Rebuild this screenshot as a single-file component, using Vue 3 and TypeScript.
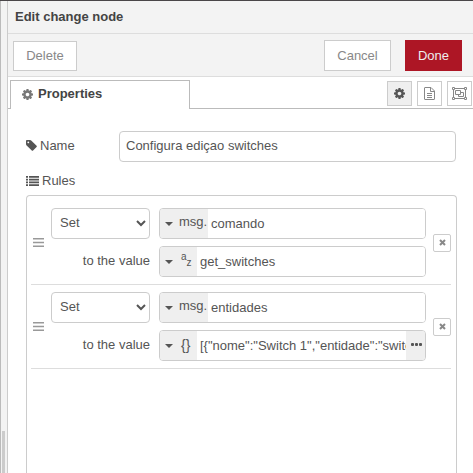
<script setup lang="ts">
import { ref } from 'vue'

type ValueType = 'msg' | 'str' | 'json'

interface Rule {
  action: string
  property: string
  valueType: ValueType
  value: string
}

const name = ref('Configura ediçao switches')

const rules = ref<Rule[]>([
  { action: 'Set', property: 'comando', valueType: 'str', value: 'get_switches' },
  { action: 'Set', property: 'entidades', valueType: 'json', value: '[{"nome":"Switch 1","entidade":"switch' },
])

const actions = ['Set', 'Change', 'Delete', 'Move']

function removeRule(index: number): void {
  rules.value.splice(index, 1)
}

const cog =
  'M1152 896q0-106-75-181t-181-75-181 75-75 181 75 181 181 75 181-75 75-181zm512-109v222q0 12-8 23t-20 13l-185 28q-19 54-39 91 35 50 107 138 10 12 10 25t-9 23q-27 37-99 108t-94 71q-12 0-26-9l-138-108q-44 23-91 38-16 136-29 186-7 28-36 28h-222q-14 0-24.500-8.500t-11.500-21.500l-28-184q-49-16-90-37l-141 107q-10 9-25 9-14 0-25-11-126-114-165-168-7-10-7-23 0-12 8-23 15-21 51-66.500t54-70.500q-27-50-41-99l-183-27q-13-2-21-12.500t-8-23.500v-222q0-12 8-23t19-13l186-28q14-46 39-92-40-57-107-138-10-12-10-24 0-10 9-23 26-36 98.500-107.500t94.500-71.500q13 0 26 10l138 107q44-23 91-38 16-136 29-186 7-28 36-28h222q14 0 24.500 8.500t11.500 21.500l28 184q49 16 90 37l142-107q9-9 24-9 13 0 25 10 129 119 165 170 7 8 7 22 0 12-8 23-15 21-51 66.500t-54 70.500q26 50 41 98l183 28q13 2 21 12.500t8 23.500z'
const tag =
  'M576 448q0-53-37.500-90.500t-90.500-37.500-90.500 37.500-37.500 90.500 37.500 90.500 90.500 37.500 90.500-37.500 37.500-90.500zm1067 576q0 53-37 90l-491 492q-39 37-91 37-53 0-90-37l-715-716q-38-37-64.500-101t-26.500-117v-416q0-52 38-90t90-38h416q53 0 117 26.500t102 64.500l715 714q37 39 37 91z'
</script>

<template>
  <div class="editor">
    <div class="gutter"><div class="thumb"></div></div>
    <main class="tray">
      <h1 class="title">Edit change node</h1>
      <div class="toolbar">
        <button type="button" class="btn delete">Delete</button>
        <button type="button" class="btn cancel">Cancel</button>
        <button type="button" class="btn done">Done</button>
      </div>

      <div class="tabs">
        <button type="button" class="tab">
          <svg class="icon" viewBox="128 128 1536 1536" aria-hidden="true"><path :d="cog" /></svg>
          <span>Properties</span>
        </button>
        <div class="tab-icons">
          <button type="button" class="square active" aria-label="Properties">
            <svg width="11" height="11" viewBox="128 128 1536 1536" aria-hidden="true"><path :d="cog" /></svg>
          </button>
          <button type="button" class="square" aria-label="Description">
            <svg class="line" width="11" height="13" viewBox="0 0 11 13" aria-hidden="true">
              <path d="M.5 1Q.5.500 1 .5H7L10.500 4V12Q10.500 12.500 10 12.500H1Q.5 12.500.5 12ZM6.500.5V4.500H10.500M3 6.500H8M3 8.500H8M3 10.500H8" />
            </svg>
          </button>
          <button type="button" class="square" aria-label="Appearance">
            <svg class="line" width="15" height="13" viewBox="0 0 15 13" aria-hidden="true">
              <path d="M2.500 1.500H12.500M2.500 11.500H12.500M1.500 2.500V10.500M13.500 2.500V10.500M.5.500H2.500V2.500H.5ZM12.500.5H14.500V2.500H12.500ZM.5 10.500H2.500V12.500H.5ZM12.500 10.500H14.500V12.500H12.500ZM3.500 3.500H8.500V7.500H3.500ZM8.500 5.500H11.500V9.500H6.500V7.500" />
            </svg>
          </button>
        </div>
      </div>

      <form class="form" @submit.prevent>
        <div class="name-row">
          <label for="node-name" class="caption">
            <svg class="icon" viewBox="128 128 1536 1536" aria-hidden="true"><path :d="tag" /></svg>
            <span>Name</span>
          </label>
          <input id="node-name" v-model="name" class="field" type="text" />
        </div>
        <div class="caption">
          <svg width="13" height="10" viewBox="0 0 13 11" preserveAspectRatio="none" aria-hidden="true">
            <path d="M0 0H2V2H0ZM3 0H13V2H3ZM0 3H2V5H0ZM3 3H13V5H3ZM0 6H2V8H0ZM3 6H13V8H3ZM0 9H2V11H0ZM3 9H13V11H3Z" />
          </svg>
          <span>Rules</span>
        </div>

        <ol class="rules">
          <li v-for="(rule, i) in rules" :key="i" class="rule">
            <svg class="handle" width="11" height="10" viewBox="0 0 11 10" aria-hidden="true">
              <path d="M0 0H11V1.500H0ZM0 3.700H11V5.200H0ZM0 7.500H11V9H0Z" />
            </svg>
            <div class="grid">
              <select v-model="rule.action" class="action" aria-label="Action">
                <option v-for="a in actions" :key="a">{{ a }}</option>
              </select>
              <div class="typed">
                <button type="button" class="type" aria-label="Property type: msg">
                  <svg width="8" height="4" viewBox="0 0 8 4" aria-hidden="true"><path d="M0 0H8L4 4Z" /></svg>
                  <span class="prefix">msg.</span>
                </button>
                <input v-model="rule.property" type="text" aria-label="Property" />
              </div>
              <label class="to" :for="`value-${i}`">to the value</label>
              <div class="typed">
                <button type="button" class="type narrow" :aria-label="`Value type: ${rule.valueType}`">
                  <svg width="8" height="4" viewBox="0 0 8 4" aria-hidden="true"><path d="M0 0H8L4 4Z" /></svg>
                  <span v-if="rule.valueType === 'str'" class="az"><span>a</span><span>z</span></span>
                  <span v-else class="braces">{}</span>
                </button>
                <input :id="`value-${i}`" v-model="rule.value" type="text" />
                <button v-if="rule.valueType === 'json'" type="button" class="expand" aria-label="Expand">
                  <svg width="11" height="3" viewBox="0 0 11 3" aria-hidden="true">
                    <rect width="3" height="3" rx="1" /><rect x="4" width="3" height="3" rx="1" /><rect x="8" width="3" height="3" rx="1" />
                  </svg>
                </button>
              </div>
            </div>
            <button type="button" class="remove" aria-label="Remove rule" @click="removeRule(i)">
              <svg width="7" height="7" viewBox="0 0 7 7" aria-hidden="true"><path d="M1 1L6 6M6 1L1 6" /></svg>
            </button>
          </li>
        </ol>
      </form>
    </main>
  </div>
</template>

<style>
body {
  margin: 0;
  background: #fff;
}
</style>

<style scoped>
* {
  box-sizing: border-box;
}
.editor {
  display: flex;
  height: 100vh;
  overflow: hidden;
  border-top: 1px solid #4a4649;
  font: 13px/20px "Liberation Sans", Arial, sans-serif;
  color: #555;
}
button,
input,
select {
  font: inherit;
  color: inherit;
  margin: 0;
}
button {
  display: flex;
  align-items: center;
  justify-content: center;
  padding: 0;
  cursor: pointer;
}
svg {
  flex: none;
  fill: currentColor;
}
.gutter {
  flex: none;
  width: 8px;
  display: flex;
  align-items: flex-end;
  padding-left: 1px;
  background: #f3f3f3;
  border-left: 1px solid #bbb;
  border-right: 1px solid #ccc;
}
.thumb {
  width: 3px;
  height: 9%;
  background: #ccc;
}
.tray {
  flex: 1;
  min-width: 0;
  display: flex;
  flex-direction: column;
}
.title {
  margin: 0;
  padding: 6px 7px;
  background: #f3f3f3;
  border-bottom: 1px solid #ddd;
  font-size: 13px;
  line-height: 20px;
  color: #444;
}
.toolbar {
  display: flex;
  align-items: center;
  padding: 6px 11px 5px 5px;
  background: #f3f3f3;
  border-bottom: 1px solid #ddd;
}
.btn {
  height: 31px;
  padding: 0 12px;
  border: 1px solid #ccc;
  border-radius: 0;
  background: #fff;
  color: #888;
}
.delete {
  width: 64px;
  height: 30px;
  margin-right: auto;
}
.cancel {
  width: 67px;
}
.done {
  width: 57px;
  margin-left: 14px;
  background: #ad1625;
  border-color: #ad1625;
  color: #eee;
}
.tabs {
  display: flex;
  justify-content: space-between;
  padding: 3px 1px 0 2px;
  background: linear-gradient(#bbb, #bbb) bottom / 100% 1px no-repeat;
}
.tab {
  width: 180px;
  height: 29px;
  gap: 5px;
  justify-content: flex-start;
  padding: 0 0 2px 11px;
  border: 1px solid #bbb;
  border-bottom: 0;
  background: #fff;
  font-weight: bold;
  color: #444;
}
.tab .icon {
  color: #777;
}
.icon {
  width: 11px;
  height: 11px;
}
.tab-icons {
  display: flex;
  gap: 5px;
  padding-top: 1px;
}
.square {
  width: 25px;
  height: 25px;
  border: 1px solid #ccc;
  background: #fff;
  color: #888;
}
.square.active {
  background: #efefef;
  color: #555;
}
.line {
  fill: none;
  stroke: currentColor;
  stroke-width: 1px;
}
.form {
  flex: 1;
  min-height: 0;
  display: flex;
  flex-direction: column;
  padding: 22px 16px 0 18px;
}
.name-row {
  display: flex;
  align-items: center;
  margin-bottom: 9px;
}
.name-row .caption {
  width: 93px;
  padding-bottom: 2px;
}
.caption {
  display: flex;
  align-items: center;
  gap: 3px;
}
.field {
  flex: 1;
  min-width: 0;
  height: 31px;
  margin-right: 1px;
  padding: 0 6px 2px;
  border: 1px solid #ccc;
  border-radius: 4px;
  background: #fff;
}
.rules {
  flex: 1;
  margin: 4px 0 0;
  padding: 5px 5px 0 4px;
  list-style: none;
  border: 1px solid #ccc;
  border-bottom: 0;
  border-radius: 4px 4px 0 0;
}
.rule {
  display: flex;
  align-items: center;
  padding: 7px 0 7px 2px;
  border-bottom: 1px solid #ddd;
}
.handle {
  color: #999;
}
.grid {
  flex: 1;
  min-width: 0;
  display: grid;
  grid-template-columns: 99px minmax(0, 1fr);
  gap: 7px 9px;
  margin: 0 7px;
  align-items: center;
}
.action {
  width: 100%;
  height: 31px;
  padding: 0 4px 2px;
  border: 1px solid #ccc;
  border-radius: 4px;
  background: #fff;
}
.to {
  text-align: right;
  padding-bottom: 2px;
}
.typed {
  display: flex;
  height: 31px;
  border: 1px solid #ccc;
  border-radius: 4px;
  overflow: hidden;
}
.typed input {
  flex: 1;
  min-width: 0;
  padding: 0 0 0 3px;
  border: 0;
  background: #fff;
}
.type,
.expand {
  flex: none;
  border: 0;
  background: #efefef;
}
.type {
  width: 48px;
  justify-content: flex-start;
  padding-left: 5px;
  gap: 6px;
}
.narrow {
  width: 37px;
  gap: 8px;
}
.prefix {
  padding-bottom: 3px;
}
.braces {
  font-size: 14px;
  padding-bottom: 2px;
}
.az {
  display: flex;
  padding-bottom: 3px;
  font-size: 10px;
  line-height: 8px;
}
.az span:first-child {
  padding-bottom: 6px;
}
.az span:last-child {
  padding-top: 6px;
}
.expand {
  width: 19px;
  padding: 0 0 3px 2px;
}
.remove {
  width: 18px;
  height: 18px;
  border: 1px solid #ccc;
  border-radius: 2px;
  background: #fff;
  color: #888;
}
.remove svg {
  stroke: currentColor;
  stroke-width: 2px;
}
</style>
